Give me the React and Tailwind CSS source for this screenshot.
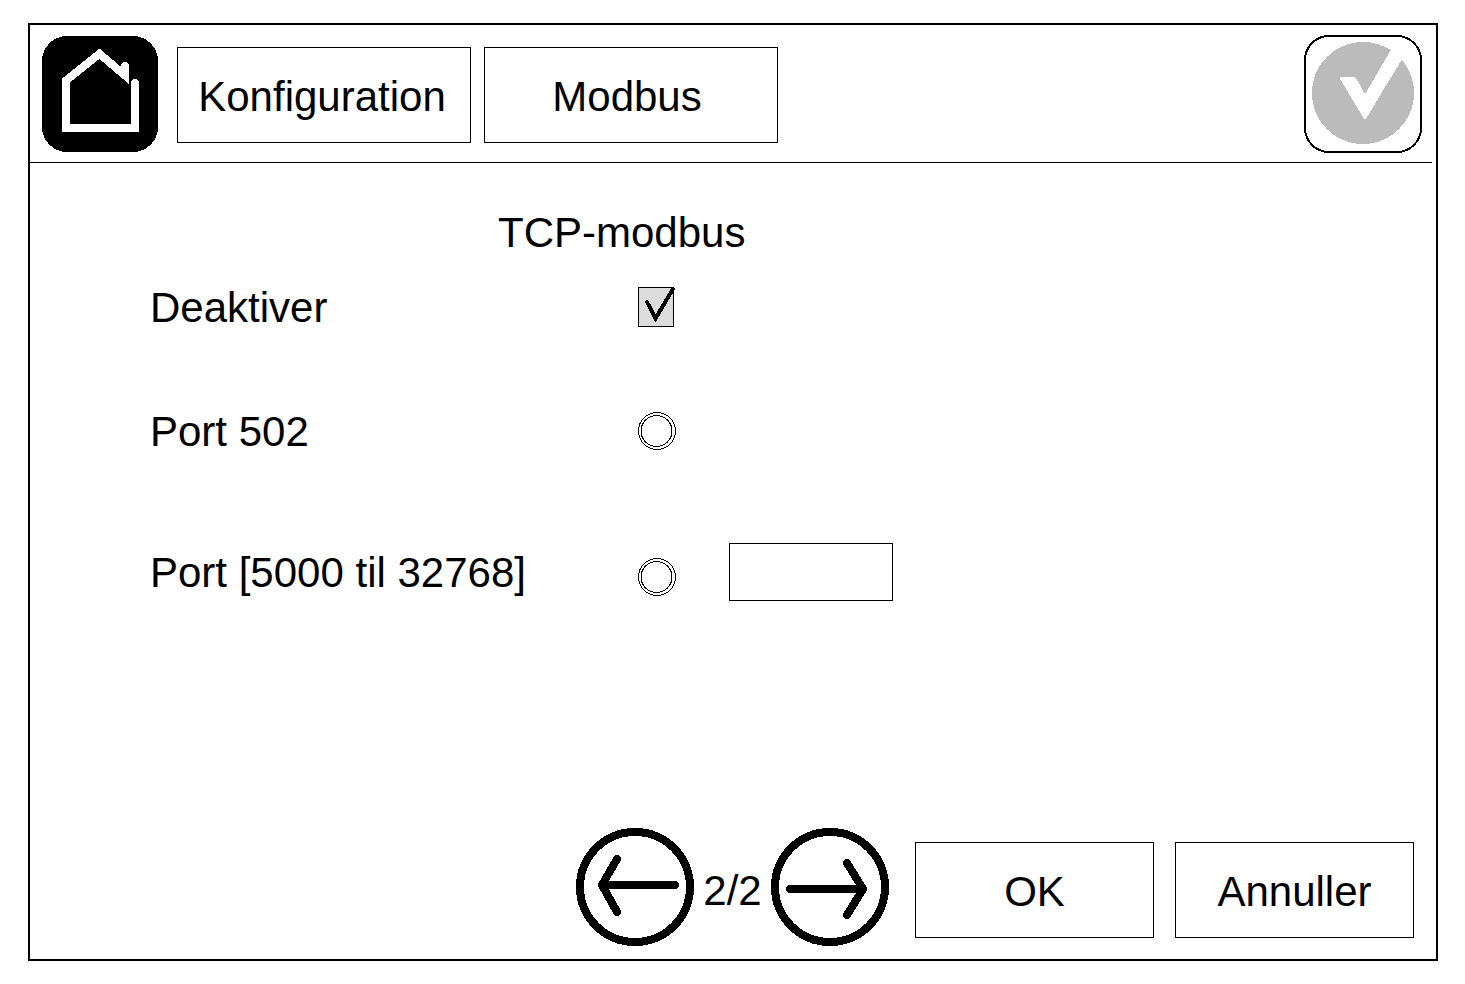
import React, { useState } from 'react'
import { clsx } from 'clsx'

function HomeIcon() {
  return (
    <svg width="116" height="116" viewBox="0 0 116 116" shapeRendering="crispEdges" aria-hidden="true">
      <rect width="116" height="116" rx="25" fill="#000" />
      <path d="M24 92V44.5L57.5 17.8L83 39.5V30" fill="none" stroke="#fff" strokeWidth="8" strokeLinejoin="miter" />
      <path d="M20 92H97" stroke="#fff" strokeWidth="8" />
      <path d="M83 38V30M93 92V47" stroke="#fff" strokeWidth="8" strokeLinecap="round" />
      <path d="M20 88H28V96H20ZM89 88H97V96H89Z" fill="#fff" />
    </svg>
  )
}

function StatusIcon() {
  return (
    <svg width="118" height="118" viewBox="0 0 118 118" shapeRendering="crispEdges" aria-hidden="true">
      <rect x="1" y="1" width="116" height="116" rx="24" fill="#fff" stroke="#000" strokeWidth="2" />
      <circle cx="59" cy="58" r="51" fill="#bbb" />
      <path d="M36 42H50.5L52.7 44L61 59.3L87 14.7L93 4.4L104 14L97.7 24.7L61 85.3L36 44Z" fill="#fff" />
    </svg>
  )
}

const ARROWS = {
  prev: 'M99 57H27M41 31L26 57L41 84',
  next: 'M19 61H91M76 35L92 61L76 87',
}

function PageButton({ direction, label }) {
  return (
    <button type="button" aria-label={label} className="shrink-0 rounded-full">
      <svg width="118" height="118" viewBox="0 0 118 118" shapeRendering="crispEdges" aria-hidden="true">
        <circle cx="59" cy="59" r="55" fill="none" stroke="#000" strokeWidth="8" />
        <path d={ARROWS[direction]} fill="none" stroke="#000" strokeWidth="8" strokeLinecap="round" />
      </svg>
    </button>
  )
}

function BoxButton({ className, children, ...props }) {
  return (
    <button type="button" className={clsx('h-24 border border-black bg-white pt-1 text-center', className)} {...props}>
      {children}
    </button>
  )
}

function Checkbox({ id, checked, onChange }) {
  return (
    <span className="relative block h-10 w-9">
      <input
        id={id}
        type="checkbox"
        checked={checked}
        onChange={onChange}
        className="peer block h-10 w-9 appearance-none border border-black bg-[#dcdcdc]"
      />
      <svg
        width="40"
        height="40"
        viewBox="0 0 40 40"
        shapeRendering="crispEdges"
        className="pointer-events-none invisible absolute top-0 left-0 overflow-visible peer-checked:visible"
        aria-hidden="true"
      >
        <path d="M9 15L17.5 31.5L35 2" fill="none" stroke="#000" strokeWidth="4" strokeLinecap="round" />
      </svg>
    </span>
  )
}

function Radio({ id, name, checked, onChange, className }) {
  return (
    <span className={clsx('relative block size-[38px]', className)}>
      <input
        id={id}
        name={name}
        type="radio"
        checked={checked}
        onChange={onChange}
        className="peer absolute inset-0 appearance-none rounded-full"
      />
      <svg
        width="38"
        height="38"
        viewBox="0 0 38 38"
        shapeRendering="crispEdges"
        className="pointer-events-none fill-white stroke-black peer-checked:fill-black"
        aria-hidden="true"
      >
        <circle cx="19" cy="19" r="18.5" className="fill-white" />
        <circle cx="18.5" cy="19" r="15.5" />
      </svg>
    </span>
  )
}

function Row({ className, htmlFor, label, children }) {
  return (
    <div className={clsx('flex items-center', className)}>
      <label htmlFor={htmlFor} className="w-[488px] shrink-0 pt-0.5">{label}</label>
      {children}
    </div>
  )
}

export default function App() {
  const [mode, setMode] = useState('off')
  const [port, setPort] = useState('')

  return (
    <div className="flex min-h-screen bg-white py-[23px] pr-[27px] pl-7 font-['Liberation_Sans',Arial,sans-serif] text-[42px] leading-[48px] text-black">
      <div className="flex flex-1 flex-col border-2 border-black">
        <header className="mr-1 flex h-[138px] items-center border-b border-black pt-px pr-2.5 pl-3">
          <button type="button" aria-label="Hjem" className="shrink-0">
            <HomeIcon />
          </button>
          <nav className="mt-0.5 ml-[19px] flex gap-[13px]">
            <BoxButton className="w-[294px] pr-1">Konfiguration</BoxButton>
            <BoxButton className="w-[294px] pr-2">Modbus</BoxButton>
          </nav>
          <button type="button" aria-label="Status" className="ml-auto shrink-0">
            <StatusIcon />
          </button>
        </header>

        <main className="pt-[46px] pl-[120px]">
          <h1 className="pl-[348px]">TCP-modbus</h1>
          <Row className="mt-[25px]" htmlFor="tcp-off" label="Deaktiver">
            <Checkbox id="tcp-off" checked={mode === 'off'} onChange={() => setMode('off')} />
          </Row>
          <Row className="mt-[74px]" htmlFor="tcp-502" label="Port 502">
            <Radio id="tcp-502" name="tcp-port" checked={mode === '502'} onChange={() => setMode('502')} />
          </Row>
          <Row className="mt-[87px]" htmlFor="tcp-custom" label="Port [5000 til 32768]">
            <Radio
              id="tcp-custom"
              name="tcp-port"
              checked={mode === 'custom'}
              onChange={() => setMode('custom')}
              className="mb-[5px] self-end"
            />
            <input
              type="text"
              inputMode="numeric"
              aria-label="Port"
              value={port}
              onChange={(e) => setPort(e.target.value)}
              className="ml-[53px] h-[58px] w-[164px] border border-black bg-white px-2"
            />
          </Row>
        </main>

        <footer className="mt-auto flex items-end justify-end pr-[22px] pb-[13px]">
          <div className="flex items-center">
            <PageButton direction="prev" label="Forrige side" />
            <span className="w-[77px] pt-2 text-center">2/2</span>
            <PageButton direction="next" label="Næste side" />
          </div>
          <BoxButton className="mb-2 ml-[26px] w-[239px]">OK</BoxButton>
          <BoxButton className="mb-2 ml-[21px] w-[239px]">Annuller</BoxButton>
        </footer>
      </div>
    </div>
  )
}
